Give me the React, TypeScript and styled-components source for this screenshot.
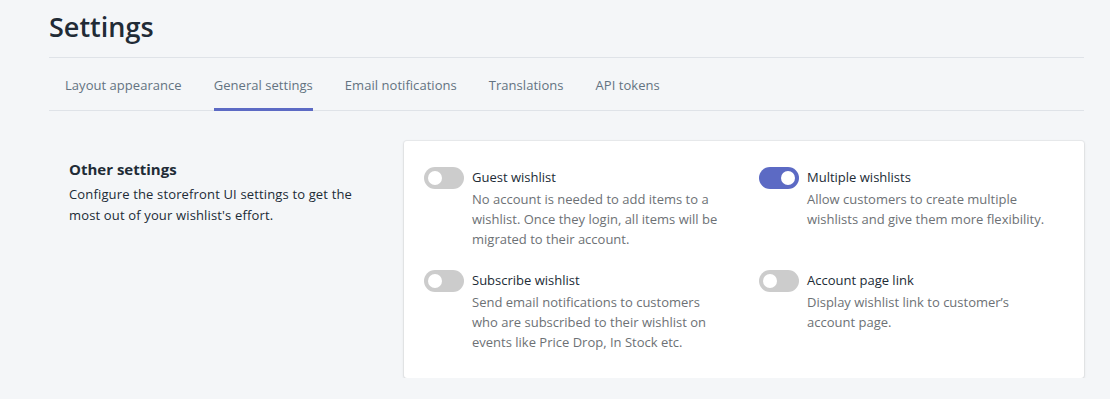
import React, { useState } from 'react';
import styled, { createGlobalStyle } from 'styled-components';

const GlobalStyle = createGlobalStyle`
  body {
    margin: 0;
    background: #f4f6f8;
    font-family: "Open Sans", "Noto Sans", sans-serif;
    color: #212b36;
  }
`;

type Option = {
  id: string,
  title: string,
  text: string,
  on: boolean
}

const initialOptions: Option[] = [
  { id: 'guest', title: 'Guest wishlist', text: 'No account is needed to add items to a wishlist. Once they login, all items will be migrated to their account.', on: false },
  { id: 'multiple', title: 'Multiple wishlists', text: 'Allow customers to create multiple wishlists and give them more flexibility.', on: true },
  { id: 'subscribe', title: 'Subscribe wishlist', text: 'Send email notifications to customers who are subscribed to their wishlist on events like Price Drop, In Stock etc.', on: false },
  { id: 'account', title: 'Account page link', text: "Display wishlist link to customer\u2019s account page.", on: false },
];

const tabs = ['Layout appearance', 'General settings', 'Email notifications', 'Translations', 'API tokens'];

const App: React.FC = () => {
  const [options, setOptions] = useState(initialOptions);
  const [activeTab, setActiveTab] = useState(1);

  const toggle = (id: string) => {
    setOptions(options.map(o => o.id === id ? { ...o, on: !o.on } : o));
  }

  return (
    <Page>
      <GlobalStyle />
      <Title>Settings</Title>
      <TabBar>
        {tabs.map((t, i) => (
          <Tab key={t} onClick={() => setActiveTab(i)}>
            <TabLabel $active={i === activeTab}>{t}</TabLabel>
          </Tab>
        ))}
      </TabBar>
      <Section>
        <Intro>
          <IntroTitle>Other settings</IntroTitle>
          <IntroText>Configure the storefront UI settings to get the most out of your wishlist's effort.</IntroText>
        </Intro>
        <Card>
          {options.map(o => (
            <OptionRow key={o.id}>
              <Switch $on={o.on} onClick={() => toggle(o.id)} aria-label={o.title} />
              <div>
                <OptionTitle>{o.title}</OptionTitle>
                <OptionText>{o.text}</OptionText>
              </div>
            </OptionRow>
          ))}
        </Card>
      </Section>
    </Page>
  )
}

const Page = styled.div`
  padding: 0 26px 0 49px;
`;

const Title = styled.h1`
  margin: 0;
  padding: 10px 0 13px;
  font-size: 27px;
  line-height: 34px;
  font-weight: 600;
  color: #212b36;
  border-bottom: 1px solid #dfe3e8;
`;

const TabBar = styled.div`
  display: flex;
  border-bottom: 1px solid #dfe3e8;
`;

const Tab = styled.button`
  background: none;
  border: 0;
  padding: 0 16px;
  cursor: pointer;
  font: inherit;
`;

const TabLabel = styled.span<{ $active: boolean }>`
  display: block;
  padding: 17px 0 13px;
  font-size: 13px;
  line-height: 20px;
  letter-spacing: 0.04px;
  color: #637381;
  border-bottom: 3px solid ${p => p.$active ? '#5c6ac4' : 'transparent'};
  margin-bottom: -1px;
`;

const Section = styled.div`
  display: flex;
  padding-top: 30px;
`;

const Intro = styled.div`
  width: 355px;
  padding: 16px 0 0 20px;
  box-sizing: border-box;
`;

const IntroTitle = styled.h2`
  margin: 0 0 3px;
  font-size: 15px;
  line-height: 24px;
  font-weight: 700;
  color: #212b36;
`;

const IntroText = styled.p`
  margin: 0;
  width: 292px;
  font-size: 13px;
  line-height: 21px;
  letter-spacing: 0.15px;
  color: #212b36;
`;

const Card = styled.div`
  flex: 1;
  display: grid;
  grid-template-columns: 335px 1fr;
  row-gap: 21px;
  padding: 26px 20px 26px;
  background: #fff;
  border-radius: 3px;
  box-shadow: 0 0 0 1px rgba(63, 63, 68, 0.05), 0 1px 3px 0 rgba(63, 63, 68, 0.15);
`;

const OptionRow = styled.div`
  display: flex;
  gap: 8px;
  align-items: flex-start;
`;

const Switch = styled.button<{ $on: boolean }>`
  position: relative;
  flex: none;
  width: 40px;
  height: 22px;
  padding: 0;
  border: 0;
  border-radius: 11px;
  background: ${p => p.$on ? '#5c6ac4' : '#cccccc'};
  cursor: pointer;

  &::after {
    content: '';
    position: absolute;
    top: 4px;
    left: ${p => p.$on ? '22px' : '4px'};
    width: 14px;
    height: 14px;
    border-radius: 50%;
    background: #fff;
  }
`;

const OptionTitle = styled.div`
  font-size: 13px;
  line-height: 20px;
  color: #212b36;
`;

const OptionText = styled.div`
  max-width: 250px;
  margin-top: 2px;
  font-size: 13px;
  line-height: 20px;
  color: #6d7175;
`;

export default App
